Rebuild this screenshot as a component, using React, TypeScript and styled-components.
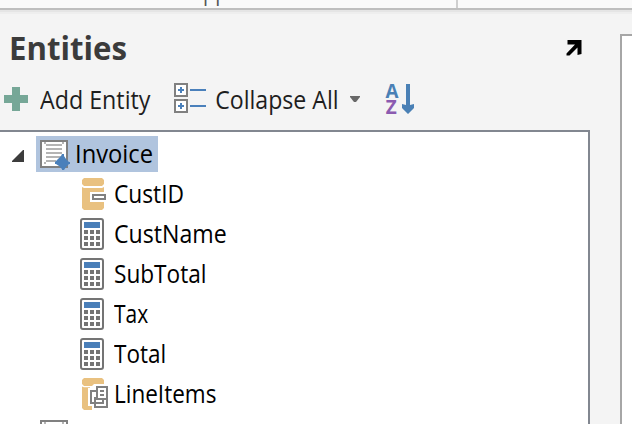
import React from 'react';
import styled, { createGlobalStyle } from 'styled-components';

const Global = createGlobalStyle`
  html, body { margin: 0; padding: 0; background: #f4f4f4; overflow: hidden; }
  * { box-sizing: border-box; }
`;

const Window = styled.div`
  width: 632px;
  height: 424px;
  display: flex;
  flex-direction: column;
  overflow: hidden;
  background: #f4f4f4;
  font-family: "Open Sans", "Noto Sans", sans-serif;
`;

const Ribbon = styled.header`
  flex: none;
  height: 14px;
  display: flex;
  background: linear-gradient(#fafafa 0 8px, #bfbfbf 8px 10px, #e5e5e5 10px 12px, #eeeeee 12px 14px);
`;

const RibbonGroup = styled.div`
  width: 458px;
  height: 8px;
  padding-left: 203px;
  border-right: 2px solid #cfcfcf;
  overflow: hidden;
  font-size: 25px;
  line-height: 24px;
  color: #555;
`;

const RibbonLabel = styled.span`
  display: block;
  margin-top: -22px;
`;

const Workspace = styled.div`
  flex: 1;
  min-height: 0;
  display: flex;
  justify-content: space-between;
`;

const Sidebar = styled.section`
  width: 590px;
  display: flex;
  flex-direction: column;
`;

const Canvas = styled.main`
  width: 12px;
  margin-top: 20px;
  background: #fff;
  border: solid #a6a6a6;
  border-width: 2px 0 0 2px;
`;

const TitleBar = styled.div`
  height: 62px;
  display: flex;
  justify-content: space-between;
  padding: 10px 7px 0 9px;
`;

const Fitted = styled.span<{ $scale: number }>`
  display: block;
  white-space: nowrap;
  transform: scaleX(${(p) => p.$scale});
  transform-origin: 0 50%;
`;

const Title = styled.h1`
  margin: 0;
  font-size: 33px;
  line-height: 48px;
  font-weight: 700;
  color: #3b3b3b;
`;

const PopOut = styled.button`
  width: 18px;
  height: 16px;
  margin-top: 16px;
  padding: 0;
  border: 0;
  background: none;
  display: flex;
`;

const Toolbar = styled.div`
  height: 54px;
  display: flex;
  align-items: flex-start;
  padding: 4px 0 0 4px;
`;

const ToolButton = styled.button<{ $width: number }>`
  width: ${(p) => p.$width}px;
  height: 38px;
  padding: 0;
  border: 0;
  background: none;
  display: flex;
  align-items: center;
  font: 25px/38px "Open Sans", "Noto Sans", sans-serif;
  color: #1e1e1e;
`;

const IconSlot = styled.span<{ $width: number; $drop?: number }>`
  flex: none;
  width: ${(p) => p.$width}px;
  display: flex;
  margin-top: ${(p) => p.$drop ?? 0}px;
`;

const LabelSlot = styled.span<{ $width: number }>`
  flex: none;
  width: ${(p) => p.$width}px;
`;

const Tree = styled.ul`
  flex: 1;
  min-height: 0;
  margin: 0;
  padding: 4px 0 0;
  list-style: none;
  background: #fff;
  border: solid #828790;
  border-width: 2px 2px 0 0;
  overflow: hidden;
  font-size: 25px;
  line-height: 34px;
  color: #000;
`;

const RootRow = styled.li`
  height: 36px;
  display: flex;
  align-items: center;
  padding-left: 12px;
  margin-bottom: 4px;
`;

const Expander = styled.span`
  width: 24px;
  height: 12px;
  margin-top: 4px;
  display: flex;
`;

const Selection = styled.span`
  width: 122px;
  height: 36px;
  display: flex;
  padding-left: 4px;
  background: #b0c4de;
`;

const EntityIconSlot = styled.span`
  width: 35px;
  padding-top: 4px;
  display: flex;
`;

const FieldRow = styled.li`
  height: 40px;
  display: flex;
  padding-left: 80px;
`;

const FieldIconSlot = styled.span`
  width: 34px;
  padding-top: 2px;
  display: flex;
`;

const NextRow = styled.li`
  padding: 4px 0 0 40px;
  display: flex;
`;

const Svg = styled.svg`
  display: block;
  flex: none;
  overflow: visible;
`;

const SortLetter = styled.text`
  font-family: "Open Sans", sans-serif;
  font-size: 19px;
  font-weight: 700;
`;

const PlusIcon = () => (
  <Svg width="24" height="24" viewBox="0 0 12 12" shapeRendering="crispEdges">
    <path d="M4 0h4v4h4v4H8v4H4V8H0V4h4z" fill="#76a797" />
  </Svg>
);

const CollapseIcon = () => (
  <Svg width="32" height="30" viewBox="0 0 16 15" shapeRendering="crispEdges">
    {[0, 8].map((y) => (
      <g key={y}>
        <rect x=".5" y={y + 0.5} width="6" height="6" fill="#fff" stroke="#808080" />
        <path d={`M2 ${y + 3.5}h3M3.5 ${y + 2}v3M8 ${y + 3.5}h8`} stroke="#4a80bb" />
      </g>
    ))}
  </Svg>
);

const SortIcon = () => (
  <Svg width="28" height="30" viewBox="0 0 28 30">
    <SortLetter x="-.5" y="13.5" fill="#4a80b5" textLength="13" lengthAdjust="spacingAndGlyphs">A</SortLetter>
    <SortLetter x="-.3" y="29.7" fill="#8b5bb0" textLength="11" lengthAdjust="spacingAndGlyphs">Z</SortLetter>
    <path d="M20 0h4v21l4-1v4l-6 6-6-6v-4l4 1z" fill="#4a80b5" />
  </Svg>
);

const PopOutIcon = () => (
  <Svg width="18" height="16" viewBox="0 0 18 16">
    <path d="M2.500 0H16.500V14L12.500 15V7.500L4.500 15.500H1.500V13.500L10 4.500H2.500z" fill="#000" />
  </Svg>
);

const EntityIcon = ({ marked }: { marked?: boolean }) => (
  <Svg width="30" height="30" viewBox="0 0 15 15">
    <rect x=".5" y=".5" width="13" height="13" fill="#fff" stroke="#808080" />
    <path d="M3 2.5h8M3 4.5h8M3 6.5h8M3 8.5h8M3 10.5h5" stroke="#b4b4b4" />
    <path d="M2 1h1v1H2zM11 1h1v1h-1zM2 11h1v1H2z" fill="#b4b4b4" />
    {marked && <path d="M11 7h1v1l1 1.500L14.500 11H15v1h-.5L13 13.500 12 15h-1v-.5L9.500 13 8 12H7.500v-1L9 9.500 10.500 8z" fill="#4a80bb" />}
  </Svg>
);

const CalculatorIcon = () => (
  <Svg width="24" height="32" viewBox="0 0 12 16">
    <rect x=".5" y=".5" width="11" height="15" rx="1" fill="#fff" stroke="#747474" />
    <path d="M2 2h8v3H2z" fill="#4a7fb9" />
    {[6, 9, 12].map((y) => (
      <path key={y} d={`M2 ${y}h2v2H2zM5 ${y}h2v2H5zM8 ${y}h2v2H8z`} fill="#747474" />
    ))}
  </Svg>
);

const KeyFieldIcon = () => (
  <Svg width="28" height="32" viewBox="0 0 14 16">
    <path d="M2 0h9l1 1v2l-1 1H2L1 3V1zM1 4.500L2 5h9l1-.5V7H5v5h7v3l-1 1H2l-1-1z" fill="#e9c180" />
    <rect x="6.5" y="8.5" width="6" height="2" fill="#fff" stroke="#808080" />
  </Svg>
);

const ListFieldIcon = () => (
  <Svg width="28" height="32" viewBox="0 0 14 16">
    <path d="M2 0h9l1 1v2H7L6 4H2L1 3V1zM1 4.200L2 4.600h3V5H4v9h2v2H2l-1-1z" fill="#e9c180" />
    <path d="M7.500 9.500v5h6v-10h-5v2h-3v6h6v-2" fill="#fff" stroke="#808080" />
    <path d="M8.500 6v4.500h5M10 6.500h2M10 8.500h2" fill="none" stroke="#808080" />
  </Svg>
);

type Field = { name: string; icon: React.FC; scale: number };

const fields: Field[] = [
  { name: 'CustID', icon: KeyFieldIcon, scale: 0.91 },
  { name: 'CustName', icon: CalculatorIcon, scale: 0.925 },
  { name: 'SubTotal', icon: CalculatorIcon, scale: 0.905 },
  { name: 'Tax', icon: CalculatorIcon, scale: 0.84 },
  { name: 'Total', icon: CalculatorIcon, scale: 0.9 },
  { name: 'LineItems', icon: ListFieldIcon, scale: 0.9 },
];

export default function App() {
  return (
    <Window>
      <Global />
      <Ribbon>
        <RibbonGroup><RibbonLabel><Fitted $scale={0.8}>pp</Fitted></RibbonLabel></RibbonGroup>
      </Ribbon>
      <Workspace>
        <Sidebar>
          <TitleBar>
            <Title><Fitted $scale={0.945}>Entities</Fitted></Title>
            <PopOut aria-label="Pop out"><PopOutIcon /></PopOut>
          </TitleBar>
          <Toolbar>
            <ToolButton $width={170}>
              <IconSlot $width={36}><PlusIcon /></IconSlot>
              <Fitted $scale={0.93}>Add Entity</Fitted>
            </ToolButton>
            <ToolButton $width={212}>
              <IconSlot $width={40} $drop={-2}><CollapseIcon /></IconSlot>
              <LabelSlot $width={136}><Fitted $scale={0.925}>Collapse All</Fitted></LabelSlot>
              <Svg width="10" height="6" viewBox="0 0 10 6"><path d="M0 0h10v1L6 6H4L0 1z" fill="#686868" /></Svg>
            </ToolButton>
            <ToolButton $width={30} aria-label="Sort"><SortIcon /></ToolButton>
          </Toolbar>
          <Tree>
            <RootRow>
              <Expander>
                <Svg width="12" height="12" viewBox="0 0 12 12"><path d="M12 0v12H0v-1L11 0z" fill="#3c3c3c" /></Svg>
              </Expander>
              <Selection>
                <EntityIconSlot><EntityIcon marked /></EntityIconSlot>
                <Fitted $scale={0.95}>Invoice</Fitted>
              </Selection>
            </RootRow>
            {fields.map(({ name, icon: Icon, scale }) => (
              <FieldRow key={name}>
                <FieldIconSlot><Icon /></FieldIconSlot>
                <Fitted $scale={scale}>{name}</Fitted>
              </FieldRow>
            ))}
            <NextRow><EntityIcon /></NextRow>
          </Tree>
        </Sidebar>
        <Canvas />
      </Workspace>
    </Window>
  );
}
